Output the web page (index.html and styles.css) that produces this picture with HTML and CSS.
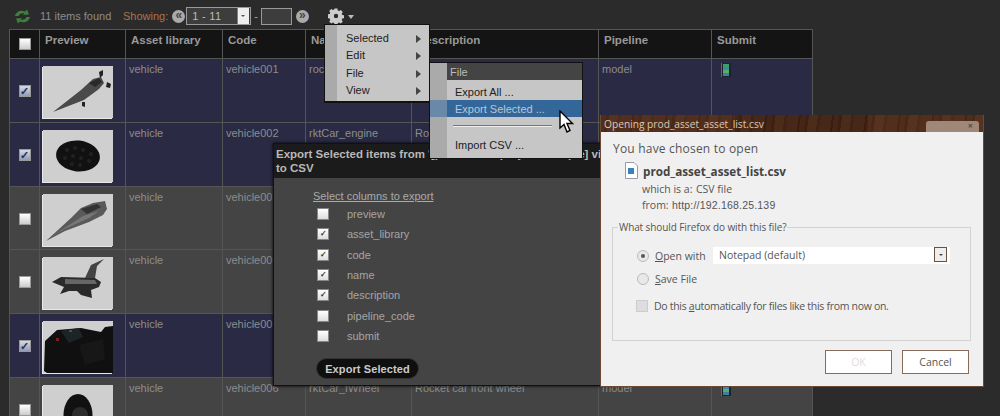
FILE: index.html
```html
<!DOCTYPE html>
<html lang="en">
<head>
<meta charset="utf-8">
<title>Asset list export</title>
<link rel="stylesheet" href="styles.css">
</head>
<body>
<div class="page">
  <div class="toolbar">
    <svg class="refresh" width="17" height="15" viewBox="0 0 17 15"><path d="M1 7 C2 2.500 7 .5 11 2.500 L13 .5 L15 5.500 L9 6 L10.500 4.500 C8 3.800 5.500 4.500 4.500 7 Z" fill="#3f7f3d"/><path d="M16 8 C15 12.500 10 14.500 6 12.500 L4 14.500 L2 9.500 L8 9 L6.500 10.500 C9 11.200 11.500 10.500 12.500 8 Z" fill="#3f7f3d"/></svg>
    <span class="found">11 items found</span>
    <span class="showing">Showing:</span>
    <span class="round-btn">&#171;</span>
    <span class="range"><span class="range-text">1 - 11</span><span class="range-arrow"></span></span>
    <span class="dash">-</span>
    <span class="range-empty"></span>
    <span class="round-btn">&#187;</span>
    <svg class="gear" width="16" height="16" viewBox="0 0 16 16"><path fill="#cdcdcd" fill-rule="evenodd" d="M6.600 0.500h2.800l.4 2 1.300.6 1.700-1.100 2 2-1.100 1.700.6 1.300 2 .4v2.800l-2 .4-.6 1.300 1.100 1.700-2 2-1.700-1.100-1.300.6-.4 2H6.600l-.4-2-1.300-.6-1.700 1.100-2-2 1.100-1.700-.6-1.300-2-.4V6.400l2-.4.600-1.300L1.200 3l2-2 1.700 1.100 1.300-.6zM8 5.800a2.200 2.200 0 1 0 0 4.400 2.200 2.200 0 0 0 0-4.400z"/></svg>
    <span class="caret"></span>
  </div>

  <table class="grid">
    <colgroup>
      <col class="c-check"><col class="c-preview"><col class="c-lib"><col class="c-code"><col class="c-name"><col class="c-desc"><col class="c-pipe"><col class="c-submit">
    </colgroup>
    <thead>
      <tr>
        <th class="check-cell"><span class="box"></span></th>
        <th>Preview</th><th>Asset library</th><th>Code</th><th>Name</th><th>Description</th><th>Pipeline</th><th>Submit</th>
      </tr>
    </thead>
    <tbody>
      <tr class="selected">
        <td class="check-cell"><span class="box on">&#10003;</span></td>
        <td><span class="thumb"><svg width="70" height="52" viewBox="0 0 70 52"><path d="M10 46 L38 24 L50 13 L58 11 L61 17 L56 23 L41 34 Z" fill="#4a4a4a"/><path d="M46 17 L56 12 L59 16 L52 21 Z" fill="#2a2a2a"/><path d="M56 6 L60 4 L60 9 L57 12 Z M64 16 L68 18 L67 22 L63 21 Z M39 36 L42 36 L42 41 L39 40 Z" fill="#222"/></svg></span></td>
        <td>vehicle</td><td>vehicle001</td><td>rocketCar</td><td></td><td>model</td>
        <td><svg class="submit-icon" width="10" height="14" viewBox="0 0 10 14"><rect width="10" height="14" fill="#20242a"/><rect width="1" height="14" fill="#666"/><rect x="2" y="1" width="6" height="3" fill="#3aa06a"/><rect x="2" y="4" width="6" height="3" fill="#3f86b8"/><rect x="2" y="7" width="6" height="3" fill="#58b060"/><rect x="2" y="10" width="6" height="3" fill="#3f7fa0"/></svg></td>
      </tr>
      <tr class="selected">
        <td class="check-cell"><span class="box on">&#10003;</span></td>
        <td><span class="thumb"><svg width="70" height="52" viewBox="0 0 70 52"><ellipse cx="35" cy="26" rx="22" ry="15.500" fill="#111" transform="rotate(6 35 26)"/><g fill="#222"><circle cx="24" cy="20" r="2"/><circle cx="32" cy="18" r="2"/><circle cx="40" cy="20" r="2"/><circle cx="48" cy="24" r="2"/><circle cx="22" cy="28" r="2"/><circle cx="30" cy="26" r="2"/><circle cx="38" cy="28" r="2"/><circle cx="46" cy="31" r="2"/><circle cx="29" cy="34" r="2"/><circle cx="37" cy="35" r="2"/></g></svg></span></td>
        <td>vehicle</td><td>vehicle002</td><td>rktCar_engine</td><td>Rocket car engine</td><td>model</td><td></td>
      </tr>
      <tr>
        <td class="check-cell"><span class="box"></span></td>
        <td><span class="thumb"><svg width="70" height="52" viewBox="0 0 70 52"><path d="M3 47 L28 24 L38 14 L50 9 L62 7 L64 15 L60 21 L46 28 L22 37 Z" fill="#5a5a5a"/><path d="M38 15 L54 10 L58 13 L44 20 Z" fill="#333"/><path d="M9 42 L40 22 L56 17 L46 24 L22 35 Z" fill="#777"/></svg></span></td>
        <td>vehicle</td><td>vehicle003</td><td></td><td></td><td></td><td></td>
      </tr>
      <tr>
        <td class="check-cell"><span class="box"></span></td>
        <td><span class="thumb"><svg width="70" height="52" viewBox="0 0 70 52"><path d="M9 25 L18 20 L52 21 L58 25 L56 30 L48 33 L49 41 L38 38 L34 34 L26 34 L17 37 L21 30 Z" fill="#2a2a2a"/><path d="M42 21 L48 8 L61 2 L54 9 L52 21 Z" fill="#444"/><path d="M22 22 L52 23 L54 27 L22 27 Z" fill="#666"/></svg></span></td>
        <td>vehicle</td><td>vehicle004</td><td></td><td></td><td></td><td></td>
      </tr>
      <tr class="selected">
        <td class="check-cell"><span class="box on">&#10003;</span></td>
        <td><span class="thumb"><svg width="70" height="52" viewBox="0 0 70 52"><path d="M1 50 L2 20 L14 9 L38 7 L58 11 L62 6 L70 5 L70 52 L4 52 Z" fill="#101010"/><path d="M18 10 L36 7 L40 16 L26 22 Z" fill="#1c2426"/><path d="M36 24 L60 18 L62 38 L42 44 Z" fill="#171717"/><rect x="13" y="17" width="3" height="3" fill="#7a1e1e"/><rect x="26" y="9" width="3" height="2" fill="#2f5a5a"/></svg></span></td>
        <td>vehicle</td><td>vehicle005</td><td></td><td></td><td></td><td></td>
      </tr>
      <tr>
        <td class="check-cell"><span class="box"></span></td>
        <td><span class="thumb"><svg width="70" height="52" viewBox="0 0 70 52"><ellipse cx="35" cy="30" rx="14.500" ry="21" fill="#111"/><circle cx="37" cy="30" r="8" fill="#2c2c2c"/></svg></span></td>
        <td>vehicle</td><td>vehicle006</td><td>rktCar_fWheel</td><td>Rocket car front wheel</td><td>model</td>
        <td><svg class="submit-icon" width="10" height="14" viewBox="0 0 10 14"><rect width="10" height="14" fill="#20242a"/><rect width="1" height="14" fill="#666"/><rect x="2" y="1" width="6" height="3" fill="#3aa06a"/><rect x="2" y="4" width="6" height="3" fill="#3f86b8"/><rect x="2" y="7" width="6" height="3" fill="#58b060"/><rect x="2" y="10" width="6" height="3" fill="#3f7fa0"/></svg></td>
      </tr>
    </tbody>
  </table>
</div>

<section class="export">
  <h2 class="export-title">Export Selected items from '[prod/asset?project=sample] view to CSV</h2>
  <div class="export-body">
    <div class="export-head">Select columns to export</div>
    <ul class="cols">
      <li><span class="box-lg"></span>preview</li>
      <li><span class="box-lg">&#10003;</span>asset_library</li>
      <li><span class="box-lg">&#10003;</span>code</li>
      <li><span class="box-lg">&#10003;</span>name</li>
      <li><span class="box-lg">&#10003;</span>description</li>
      <li><span class="box-lg"></span>pipeline_code</li>
      <li><span class="box-lg"></span>submit</li>
    </ul>
    <button class="export-btn">Export Selected</button>
  </div>
</section>

<nav class="menu menu-main">
  <div class="menu-item">Selected<span class="arrow"></span></div>
  <div class="menu-item">Edit<span class="arrow"></span></div>
  <div class="menu-item">File<span class="arrow"></span></div>
  <div class="menu-item">View<span class="arrow"></span></div>
</nav>

<nav class="menu menu-sub">
  <div class="sub-title">File</div>
  <div class="sub-item">Export All ...</div>
  <div class="sub-item active">Export Selected ...</div>
  <div class="sub-sep"></div>
  <div class="sub-item">Import CSV ...</div>
</nav>

<svg class="cursor" width="16" height="24" viewBox="0 0 16 24"><path d="M1 1 L1 18 L5 14.500 L8 22 L11 20.500 L8 13.500 L13.500 13.500 Z" fill="#fff" stroke="#000" stroke-width="1.400"/></svg>

<section class="ff">
  <header class="ff-bar">
    <span>Opening prod_asset_asset_list.csv</span>
    <span class="ff-close">&#215;</span>
  </header>
  <div class="ff-body">
    <p class="ff-intro">You have chosen to open</p>
    <div class="ff-file">
      <svg width="15" height="17" viewBox="0 0 15 17"><path d="M1.500 .5H10L13.500 4V16.500H1.500Z" fill="#fff" stroke="#99a"/><rect x="4" y="6" width="6" height="6" fill="#3a7fc0"/></svg>
      <strong>prod_asset_asset_list.csv</strong>
    </div>
    <div class="ff-meta"><span class="ff-k">which is a:</span><span>CSV file</span></div>
    <div class="ff-meta"><span class="ff-k short">from:</span><span class="ff-url">http://192.168.25.139</span></div>
    <fieldset class="ff-set">
      <legend>What should Firefox do with this file?</legend>
      <div class="ff-row first"><span class="radio on"></span><span class="ff-open"><u>O</u>pen with</span><span class="ff-select">Notepad (default)<span class="ff-select-btn"></span></span></div>
      <div class="ff-row"><span class="radio"></span><span><u>S</u>ave File</span></div>
      <div class="ff-row auto"><span class="ff-check"></span><span>Do this <u>a</u>utomatically for files like this from now on.</span></div>
    </fieldset>
    <div class="ff-actions">
      <button class="ff-btn disabled">OK</button>
      <button class="ff-btn">Cancel</button>
    </div>
  </div>
</section>
</body>
</html>
```
FILE: styles.css
```css
html, body { margin: 0; padding: 0; height: 416px; overflow: hidden; background: #2b2b2b; }
body { font-family: "Liberation Sans", Arial, sans-serif; font-size: 11px; color: #999; position: relative; }
.page { padding-left: 9px; height: 416px; overflow: hidden; }

.toolbar { height: 29px; display: flex; align-items: center; box-sizing: border-box; padding: 3px 0 0 5px; }
.refresh { margin-right: 9px; }
.found { color: #8b8b8b; font-size: 11px; width: 75px; }
.showing { color: #a9744c; margin-left: 8px; font-size: 11px; }
.round-btn { width: 13px; height: 13px; border-radius: 50%; background: #aaa; color: #444; font-size: 12px; line-height: 11px; text-align: center; margin-left: 4px; font-weight: bold; }
.range { width: 63px; height: 16px; border: 1px solid #999; background: #3d3d3d; margin-left: 1px; display: flex; align-items: center; justify-content: space-between; color: #bbb; font-size: 11px; letter-spacing: .3px; }
.range-text { padding-left: 5px; }
.range-arrow { width: 11px; height: 16px; background: #eee; border-left: 1px solid #a9744c; margin-right: 1px; position: relative; }
.range-arrow::after { content: ""; position: absolute; left: 3px; top: 7px; border: 2px solid transparent; border-top-color: #555; }
.dash { margin: 0 3px 0 3px; color: #aaa; }
.range-empty { width: 29px; height: 15px; border: 1px solid #999; background: #3d3d3d; }
.gear { margin-left: 19px; }
.caret { width: 0; height: 0; border: 3px solid transparent; border-top: 4px solid #bbb; margin: 4px 0 0 4px; }

.grid { border-collapse: collapse; table-layout: fixed; width: 803px; }
.c-check { width: 30px; } .c-preview { width: 86px; } .c-lib { width: 97px; } .c-code { width: 83px; }
.c-name { width: 106px; } .c-desc { width: 187px; } .c-pipe { width: 113px; } .c-submit { width: 101px; }
.grid th, .grid td { border: 1px solid #555; padding: 0; vertical-align: top; text-align: left; }
.grid th { height: 29px; background: #141414; color: #999; font-size: 11.500px; font-weight: bold; padding: 4px 5px 0; box-sizing: border-box; }
.grid td { height: 63.800px; background: #444; color: #8c8c8c; padding: 4px 3px 0 3px; box-sizing: border-box; line-height: 13px; }
.grid tr.selected td { background: #2a2a44; }
.grid th.check-cell, .grid td.check-cell { padding: 0; text-align: center; vertical-align: middle; }
.box { display: inline-block; width: 10px; height: 10px; background: linear-gradient(#fff, #ccc); border: 1px solid #999; vertical-align: middle; }
.box.on { background: linear-gradient(#d6dbe8, #8f9bb8); color: #334; font-size: 11px; line-height: 10px; text-align: center; font-weight: bold; }
.thumb { display: block; width: 70px; height: 52px; margin: 3px 0 0 0; background: #cfcfcf; box-shadow: -1px 1px 0 #e8e8e8; overflow: hidden; }
.thumb svg { display: block; }
.submit-icon { display: block; margin: 0 0 0 6px; }

.export { position: absolute; left: 273px; top: 143px; width: 350px; height: 243px; box-sizing: border-box; background: #1b1b1b; border: 1px solid #111; color: #bbb; display: flex; flex-direction: column; box-shadow: 0 0 3px #000; }
.export-title { margin: 0; padding: 3px 0 3px 2px; height: 28px; flex: none; font-size: 11.500px; line-height: 14px; font-weight: bold; color: #b8b8b8; overflow: hidden; }
.export-body { flex: 1; background: #444; padding: 11px 0 0 39px; }
.export-head { text-decoration: underline; color: #aaa; height: 14px; line-height: 14px; }
.cols { list-style: none; margin: 1px 0 0 4px; padding: 0; }
.cols li { display: flex; align-items: center; height: 20.300px; color: #a5a5a5; }
.box-lg { width: 10px; height: 10px; margin-right: 18px; border: 1px solid #888; background: linear-gradient(#fff, #ddd); color: #333; font-size: 8px; line-height: 10px; text-align: center; font-weight: bold; }
.export-btn { display: block; margin: 12px 0 0 3px; width: 103px; height: 21px; border-radius: 11px; border: 1px solid #333; background: #0f0f0f; color: #ccc; font: bold 11px "Liberation Sans", Arial, sans-serif; letter-spacing: .1px; padding: 0; }

.menu { position: absolute; box-sizing: border-box; background: #c6c6c6; border: 1px solid #111; color: #222; }
.menu-main { left: 324px; top: 24px; width: 106px; height: 79px; padding-top: 5px; border-bottom: 2px solid #111; background: linear-gradient(90deg, #aaa 12px, #c6c6c6 12px); }
.menu-item { height: 17.300px; line-height: 17px; padding-left: 21px; position: relative; }
.arrow { position: absolute; right: 8px; top: 5px; width: 0; height: 0; border: 4px solid transparent; border-left: 5px solid #444; border-right: 0; }
.menu-sub { left: 429px; top: 62px; width: 154px; height: 97px; background: linear-gradient(90deg, #aaa 17px, #c6c6c6 17px); }
.sub-title { margin-left: 17px; height: 17px; line-height: 18px; background: #444; color: #bbb; padding-left: 3px; }
.sub-item { height: 17px; line-height: 18px; padding-left: 25px; }
.sub-title + .sub-item { margin-top: 3px; }
.sub-item.active { background: linear-gradient(90deg, #6a89a8 17px, #336699 17px); color: #b9c7d6; }
.sub-sep { height: 1px; background: #777; border-bottom: 1px solid #eee; margin: 8px 30px 9px 23px; }

.cursor { position: absolute; left: 559px; top: 110px; }

.ff { position: absolute; left: 600px; top: 115px; width: 384px; height: 272px; box-sizing: border-box; border: 1px solid #6b4a35; border-top: 0; font-family: "Open Sans", "Liberation Sans", sans-serif; font-size: 10.500px; color: #555; background: #f0f0f0; display: flex; flex-direction: column; }
.ff-bar { height: 17px; flex: none; display: flex; justify-content: space-between; align-items: center; padding-left: 3px; color: #d8c9bb; font-size: 10.200px; background: linear-gradient(90deg, rgba(90,50,30,.35) 0 35%, rgba(40,20,10,.2) 35% 70%, rgba(90,50,30,.3) 70%), repeating-linear-gradient(98deg, #4c2a19 0 5px, #412314 5px 8px, #543220 8px 17px, #472718 17px 20px, #4f2d1c 20px 31px, #3c2012 31px 33px); }
.ff-close { align-self: flex-end; width: 53px; height: 11px; line-height: 10px; background: #a08878; color: #333; text-align: right; padding-right: 6px; box-sizing: border-box; border-radius: 3px 3px 0 0; font-size: 9px; margin-right: 4px; }
.ff-body { flex: 1; position: relative; padding: 0 13px 0 11px; }
.ff-intro { margin: 8px 0 0 1px; height: 17px; line-height: 17px; font-size: 12px; letter-spacing: .2px; }
.ff-file { display: flex; align-items: center; gap: 4px; margin: 5px 0 0 12px; height: 17px; }
.ff-file strong { font-size: 11.700px; color: #444; font-weight: 700; }
.ff-meta { display: flex; height: 16px; line-height: 16px; margin-left: 30px; }
.ff-file + .ff-meta { margin-top: 2px; }
.ff-k { width: 54px; }
.ff-k.short { width: 30px; }
.ff-url { font-family: "Liberation Sans", sans-serif; letter-spacing: .2px; }
.ff-set { margin: 7px 0 0 0; padding: 0 0 0 24px; height: 121px; width: 359px; border: 1px solid #d2d2d2; box-sizing: border-box; }
.ff-set legend { padding: 0 1px; margin-left: -19px; font-size: 10px; letter-spacing: -.1px; }
.ff-row { display: flex; align-items: center; height: 17px; margin-top: 6px; }
.ff-row.first { margin-top: 13px; }
.ff-row.auto { margin-top: 10px; margin-left: -1px; letter-spacing: -.3px; }
.radio { width: 10px; height: 10px; border-radius: 50%; border: 1px solid #bbb; background: #e8e8e8; margin-right: 6px; position: relative; }
.radio.on::after { content: ""; position: absolute; left: 3px; top: 3px; width: 4px; height: 4px; border-radius: 50%; background: #555; }
.ff-open { width: 58px; }
.ff-select { width: 237px; height: 17px; background: #fff; line-height: 17px; padding-left: 6px; box-sizing: border-box; position: relative; }
.ff-select-btn { position: absolute; right: 3px; top: 0; width: 11px; height: 13px; border: 1px solid #6b5040; background: #eee; }
.ff-select-btn::after { content: ""; position: absolute; left: 4px; top: 6px; border: 2px solid transparent; border-top-color: #444; }
.ff-check { width: 10px; height: 10px; border: 1px solid #ccc; background: #ddd; margin-right: 6px; }
.ff-actions { display: flex; justify-content: flex-end; gap: 10px; margin: 9px 1px 0 0; }
.ff-btn { width: 67px; height: 24px; background: #fff; border: 1.500px solid #856d5d; font: inherit; color: #555; padding: 0; }
.ff-btn.disabled { color: #ddd; }
```
